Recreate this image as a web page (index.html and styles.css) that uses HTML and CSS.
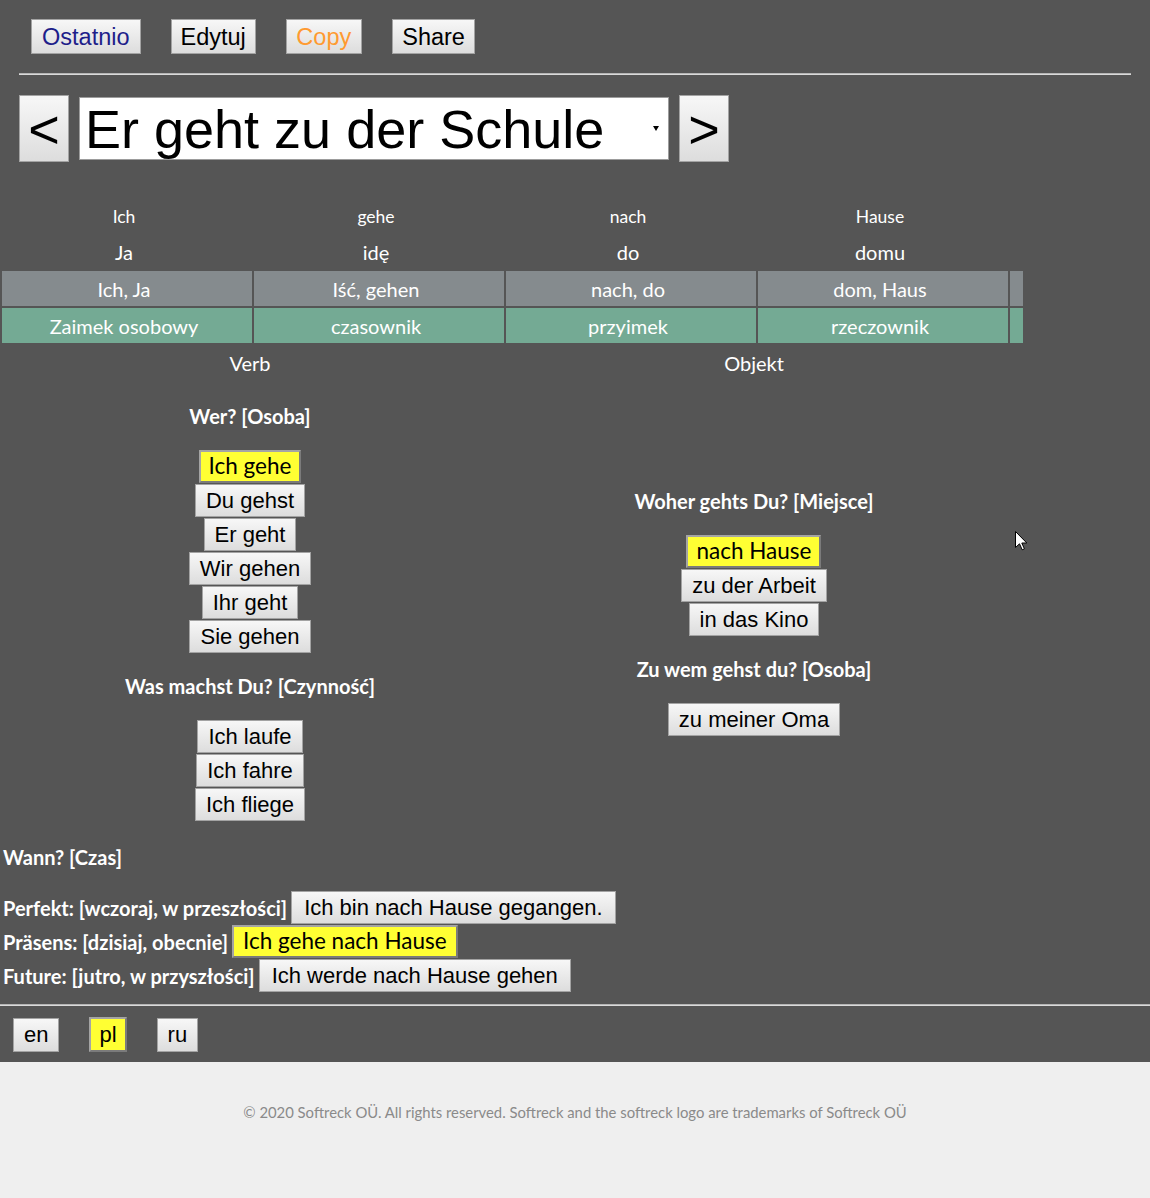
FILE: index.html
```html
<!DOCTYPE html>
<html lang="pl">
<head>
<meta charset="utf-8">
<title>Er geht zu der Schule</title>
<link rel="stylesheet" href="styles.css">
</head>
<body>
<div class="page">
  <nav class="topbar">
    <button class="btn btn-top btn-recent">Ostatnio</button>
    <button class="btn btn-top">Edytuj</button>
    <button class="btn btn-top btn-copy">Copy</button>
    <button class="btn btn-top btn-share">Share</button>
  </nav>
  <hr class="rule rule-top">
  <div class="sentence-bar">
    <button class="btn btn-arrow">&lt;</button>
    <div class="sentence-select"><span class="sentence-text">Er geht zu der Schule</span><span class="caret"></span></div>
    <button class="btn btn-arrow">&gt;</button>
  </div>

  <table class="words">
    <tr class="row-de"><td>Ich</td><td>gehe</td><td>nach</td><td>Hause</td><td class="pad"></td></tr>
    <tr class="row-pl"><td>Ja</td><td>idę</td><td>do</td><td>domu</td><td class="pad"></td></tr>
    <tr class="row-base"><td>Ich, Ja</td><td>Iść, gehen</td><td>nach, do</td><td>dom, Haus</td><td class="pad"></td></tr>
    <tr class="row-pos"><td>Zaimek osobowy</td><td>czasownik</td><td>przyimek</td><td>rzeczownik</td><td class="pad"></td></tr>
  </table>

  <div class="parts">
    <div>Verb</div>
    <div>Objekt</div>
  </div>

  <div class="options">
    <div class="col">
      <h4 class="q">Wer? [Osoba]</h4>
      <div class="stack">
        <button class="btn btn-on">Ich gehe</button>
        <button class="btn">Du gehst</button>
        <button class="btn">Er geht</button>
        <button class="btn">Wir gehen</button>
        <button class="btn">Ihr geht</button>
        <button class="btn">Sie gehen</button>
      </div>
      <h4 class="q">Was machst Du? [Czynność]</h4>
      <div class="stack">
        <button class="btn">Ich laufe</button>
        <button class="btn">Ich fahre</button>
        <button class="btn">Ich fliege</button>
      </div>
    </div>
    <div class="col">
      <h4 class="q">Woher gehts Du? [Miejsce]</h4>
      <div class="stack">
        <button class="btn btn-on">nach Hause</button>
        <button class="btn">zu der Arbeit</button>
        <button class="btn">in das Kino</button>
      </div>
      <h4 class="q">Zu wem gehst du? [Osoba]</h4>
      <div class="stack">
        <button class="btn">zu meiner Oma</button>
      </div>
    </div>
  </div>

  <section class="tenses">
    <h4 class="q q-left">Wann? [Czas]</h4>
    <div class="tense-list">
      <div class="tense"><span class="tense-label">Perfekt: [wczoraj, w przeszłości]</span><button class="btn btn-tense">Ich bin nach Hause gegangen.</button></div>
      <div class="tense"><span class="tense-label">Präsens: [dzisiaj, obecnie]</span><button class="btn btn-on btn-tense-on">Ich gehe nach Hause</button></div>
      <div class="tense"><span class="tense-label">Future: [jutro, w przyszłości]</span><button class="btn btn-tense">Ich werde nach Hause gehen</button></div>
    </div>
  </section>

  <hr class="rule rule-bottom">
  <div class="langs">
    <button class="btn btn-lang">en</button>
    <button class="btn btn-lang btn-on btn-lang-on">pl</button>
    <button class="btn btn-lang">ru</button>
  </div>
</div>
<footer class="footer">© 2020 Softreck OÜ. All rights reserved. Softreck and the softreck logo are trademarks of Softreck OÜ</footer>

<svg class="cursor" width="13" height="20" viewBox="0 0 13 20" aria-hidden="true">
  <path d="M0.5 0.5 L0.5 16.5 L4.5 12.8 L7.2 18.8 L9.4 17.8 L6.8 12 L11.8 12 Z" fill="#fff" stroke="#000" stroke-width="1"/>
</svg>
</body>
</html>
```

FILE: styles.css
```css
* { box-sizing: border-box; }

html, body {
  margin: 0;
  padding: 0;
}

body {
  background: #555555;
  color: #ffffff;
  font-family: Lato, "Open Sans", sans-serif;
  position: relative;
}

.btn {
  font-family: "Liberation Sans", Arial, sans-serif;
  font-size: 22px;
  color: #000;
  background: linear-gradient(#f7f7f7, #dddddd);
  border: 1px solid #a3a3a3;
  border-radius: 0;
  height: 33px;
  padding: 0 10px;
  margin: 0;
  line-height: 1;
  cursor: pointer;
}

.btn-on {
  background: #ffff33;
  border: 2px solid;
  border-color: #a4a4a4 #7b7b7b #7b7b7b #a4a4a4;
  font-family: Lato, sans-serif;
  font-size: 22.5px;
  padding: 0 8px;
}

/* top bar */
.topbar {
  display: flex;
  gap: 30px;
  padding: 19px 0 0 31px;
}

.btn-top {
  font-size: 23.5px;
  height: 35px;
  padding: 2px 9px 0;
}

.btn-recent { color: #1e1e8a; padding: 2px 10px 0; }
.btn-copy { color: #ff9a30; padding: 2px 9.5px 0; }
.btn-share { padding: 2px 9.5px 0; }

.rule {
  height: 1px;
  border: 0;
  border-top: 1px solid #b5b5b5;
  border-bottom: 1px solid #dadada;
  background: transparent;
}

.rule-top { margin: 19px 19px 0; }
.rule-bottom { margin: 12px 0 0; }

/* sentence selector */
.sentence-bar {
  display: flex;
  align-items: center;
  gap: 10px;
  padding-left: 19px;
  margin-top: 20px;
}

.btn-arrow {
  font-size: 54px;
  width: 50px;
  height: 67px;
  padding: 0;
}

.sentence-select {
  width: 590px;
  height: 63px;
  background: #fff;
  border: 1px solid #9c9c9c;
  color: #000;
  font-family: "Liberation Sans", Arial, sans-serif;
  font-size: 54px;
  display: flex;
  align-items: center;
  padding-left: 5px;
}

.sentence-text { line-height: 1; }

.caret {
  margin-left: auto;
  margin-right: 9px;
  width: 0;
  height: 0;
  border-left: 3px solid transparent;
  border-right: 3px solid transparent;
  border-top: 5px solid #000;
}

/* word table */
.words {
  border-collapse: separate;
  border-spacing: 2px;
  table-layout: fixed;
  width: 1025px;
  margin-top: 35px;
}

.words td {
  width: 250px;
  height: 34px;
  padding: 0 6px 0 0;
  text-align: center;
  font-size: 20px;
  color: #fff;
}

.words td.pad { width: 13px; padding: 0; }

.row-de td { font-size: 17.5px; }
.row-base td { background: #858b8e; height: 35px; }
.row-pos td { background: #74aa94; height: 35px; }

/* parts */
.parts {
  display: grid;
  grid-template-columns: 500px 500px;
  column-gap: 4px;
  padding-top: 6px;
  line-height: 24px;
  font-size: 20px;
  text-align: center;
}

/* options */
.options {
  display: grid;
  grid-template-columns: 500px 500px;
  column-gap: 4px;
  align-items: center;
  margin-top: 8px;
}

.col {
  display: flex;
  flex-direction: column;
  align-items: center;
}

.q {
  font-size: 20px;
  font-weight: 700;
  line-height: 25px;
  margin: 21px 0;
}

.stack {
  display: flex;
  flex-direction: column;
  align-items: center;
  gap: 1px;
}

/* tenses */
.tenses {
  padding-left: 3px;
}

.q-left {
  margin: 24px 0 21px;
}

.tense-list {
  display: flex;
  flex-direction: column;
  gap: 1px;
}

.tense {
  display: flex;
  align-items: center;
  gap: 4px;
}

.tense-label {
  font-size: 20px;
  font-weight: 700;
}

.btn-tense { padding: 0 12px; }
.btn-tense-on { padding: 0 9px; }

/* languages */
.langs {
  display: flex;
  align-items: center;
  gap: 30px;
  padding: 11px 0 10px 13px;
}

.btn-lang {
  height: 34px;
  padding: 0 10px;
}

.btn-lang-on {
  font-family: "Liberation Sans", Arial, sans-serif;
  font-size: 22px;
  height: 35px;
  padding: 0 8px;
}

/* footer */
.footer {
  background: #efefef;
  color: #8a8a8a;
  height: 136px;
  padding-top: 41px;
  text-align: center;
  font-size: 14.85px;
  line-height: 18px;
}

.cursor {
  position: absolute;
  left: 1015px;
  top: 531px;
}
```
